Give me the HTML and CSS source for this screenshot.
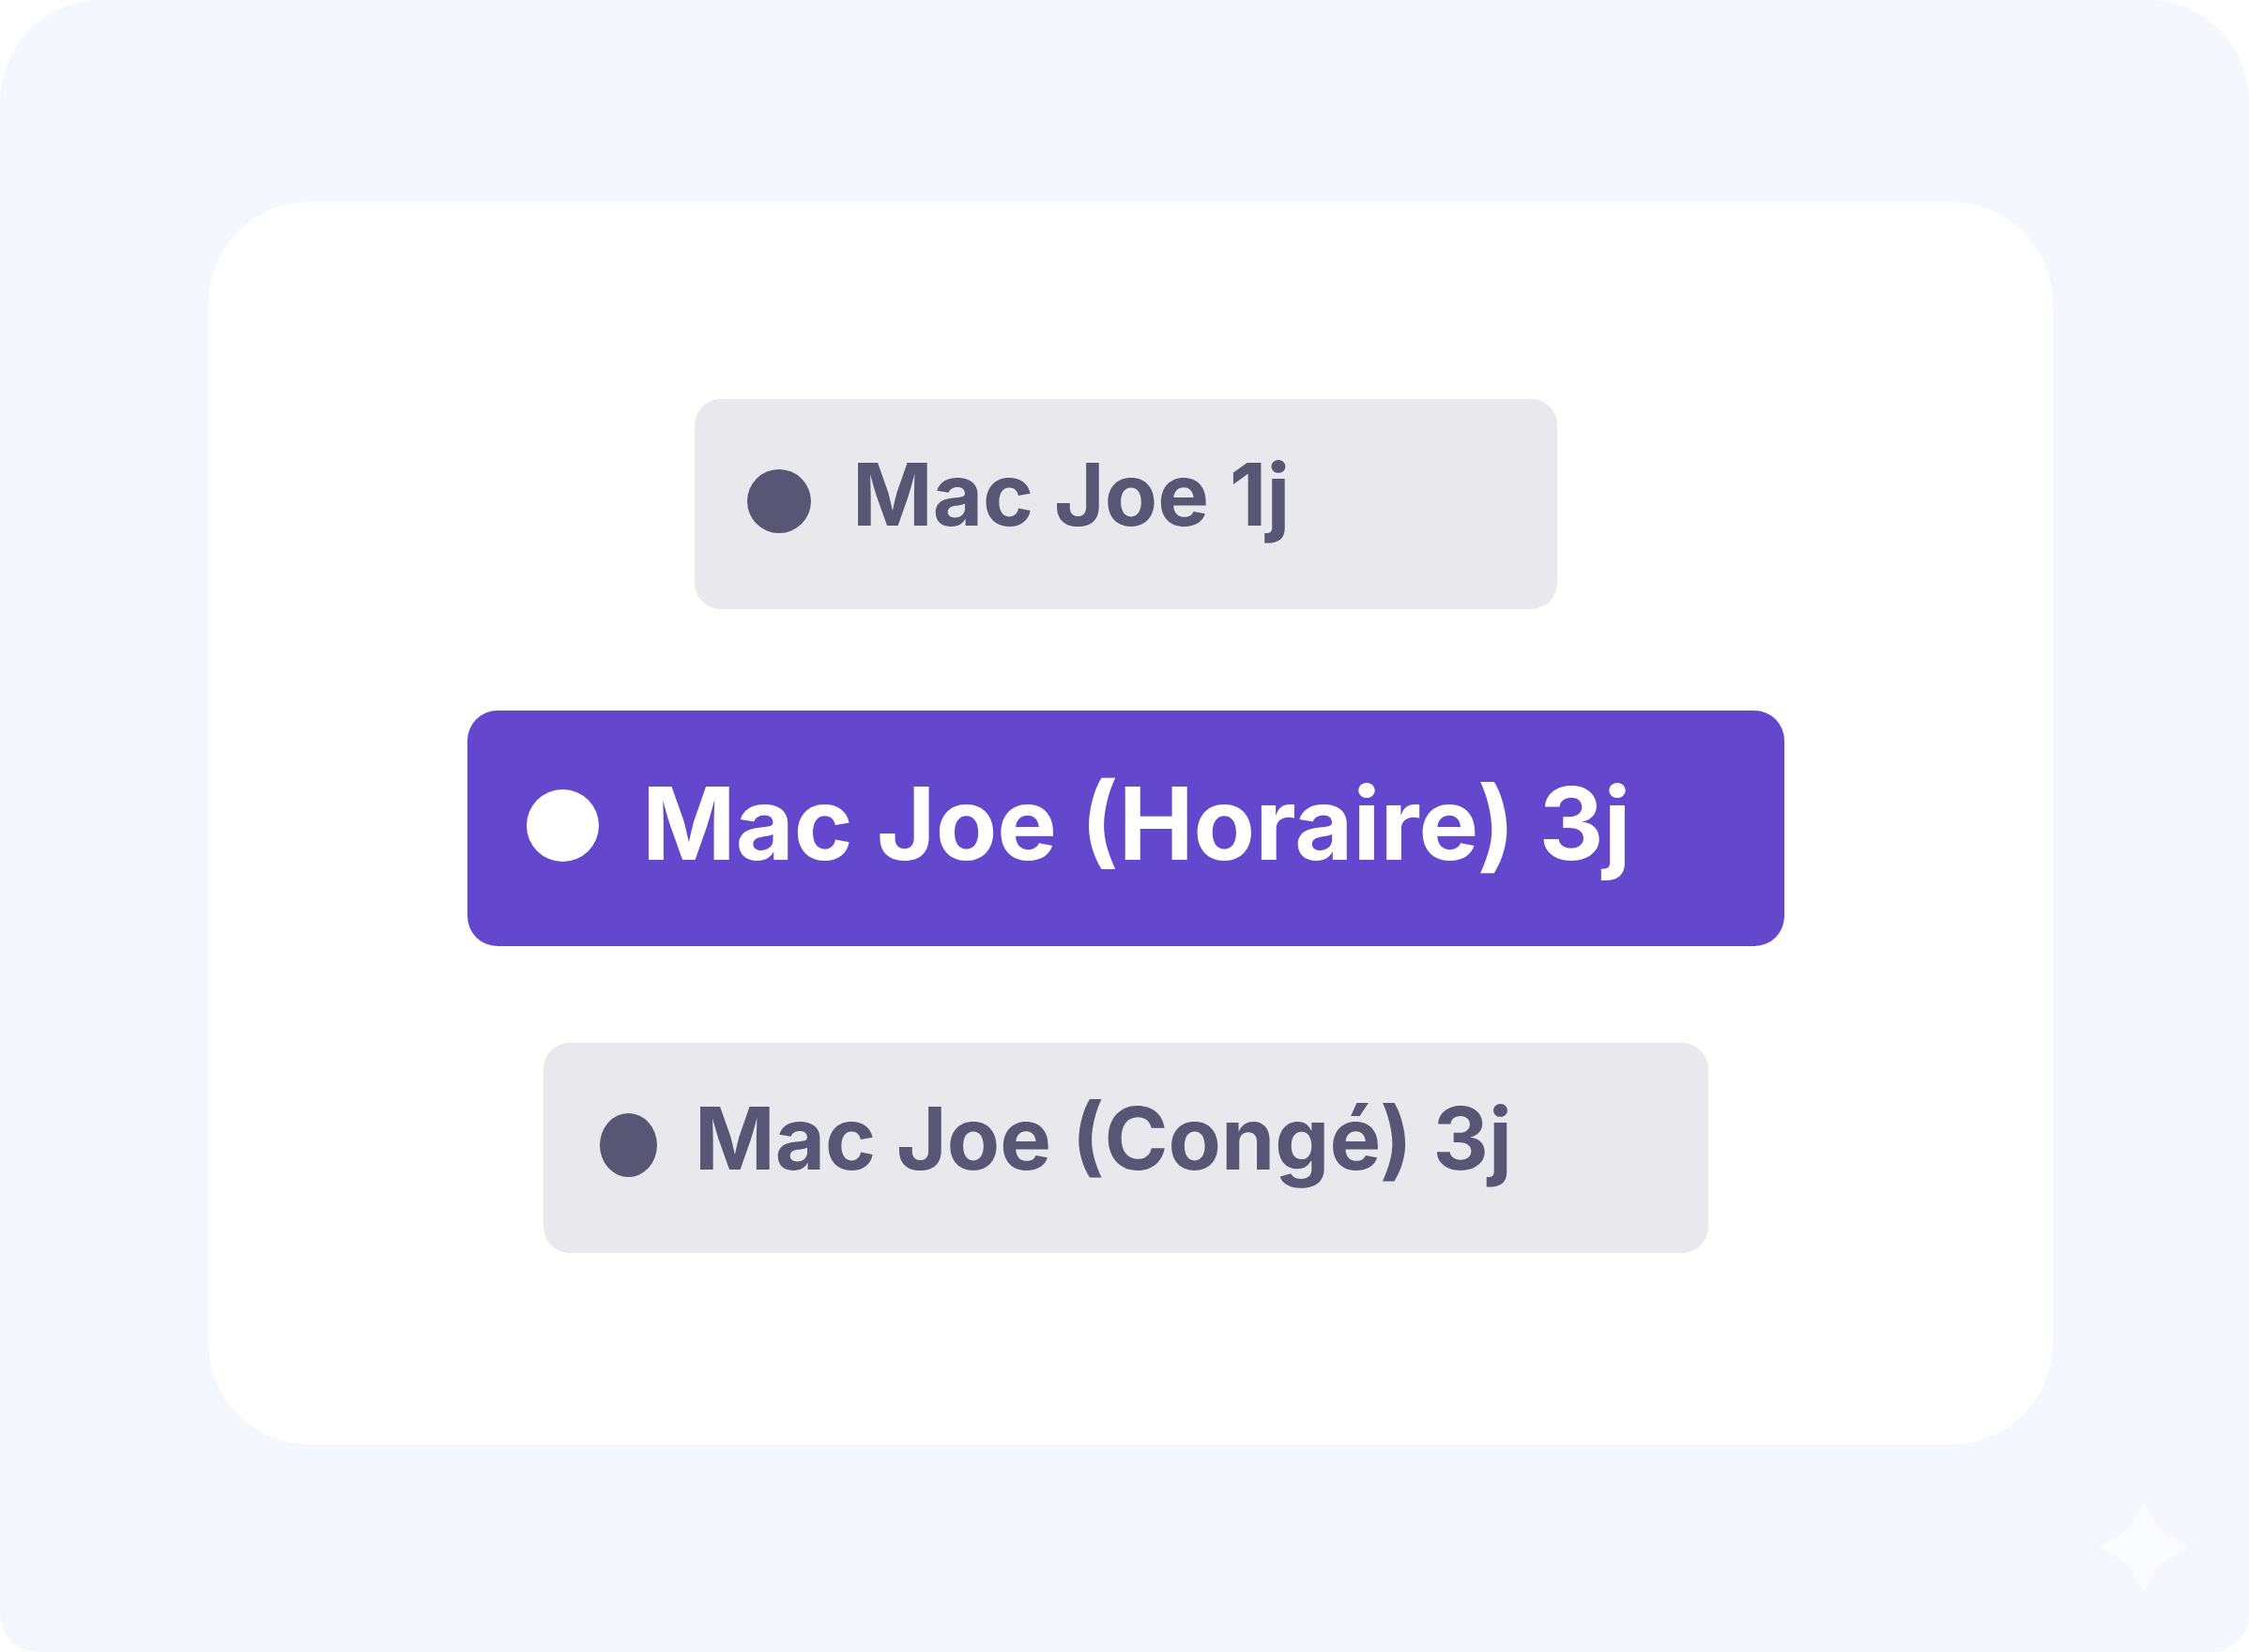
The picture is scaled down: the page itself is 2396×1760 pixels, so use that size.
FILE: index.html
```html
<!DOCTYPE html>
<html lang="fr">
<head>
    <meta charset="UTF-8">
    <meta name="viewport" content="width=device-width, initial-scale=1.0">
    <title>Mac Joe</title>
    <link rel="stylesheet" href="styles.css">
</head>
<body>

    <main class="panel">
        <ul class="card">
            <li class="entry entry-short">
                <span class="dot"></span>
                <span class="label">Mac Joe 1j</span>
            </li>
            <li class="entry entry-active">
                <span class="dot"></span>
                <span class="label">Mac Joe (Horaire) 3j</span>
            </li>
            <li class="entry entry-long">
                <span class="dot"></span>
                <span class="label">Mac Joe (Congé) 3j</span>
            </li>
        </ul>

        <svg class="sparkle" viewBox="0 0 96 96" aria-hidden="true">
            <path d="M48 0 C49.500 0 50 1 50.500 2.500 C59 24 72 37 93.500 45.500 C95 46 96 46.500 96 48 C96 49.500 95 50 93.500 50.500 C72 59 59 72 50.500 93.500 C50 95 49.500 96 48 96 C46.500 96 46 95 45.500 93.500 C37 72 24 59 2.500 50.500 C1 50 0 49.500 0 48 C0 46.500 1 46 2.500 45.500 C24 37 37 24 45.500 2.500 C46 1 46.500 0 48 0 Z"/>
        </svg>
    </main>

</body>
</html>
```
FILE: styles.css
```css
* {
    box-sizing: border-box;
}

body {
    font-family: Inter, "Liberation Sans", sans-serif;
    background-color: #fff;
    margin: 0;
}

.panel {
    position: relative;
    display: flex;
    min-height: 100vh;
    padding: 215px 209px 221px 222px;
    background-color: #f4f7fe;
    border-radius: 108px 108px 40px 40px;
}

.card {
    flex: 1;
    display: flex;
    flex-direction: column;
    align-items: center;
    margin: 0;
    padding: 210px 10px 204px 0;
    list-style: none;
    background-color: #fff;
    border-radius: 108px;
}

.entry {
    display: flex;
    align-items: center;
    gap: 40px;
    max-width: 100%;
    padding: 46px 56px 66px;
    background-color: #e8e8ed;
    border-radius: 28px;
    color: #585575;
    font-size: 92px;
    font-weight: 700;
    line-height: 112px;
    white-space: nowrap;
}

.entry-short {
    width: 919px;
    gap: 44px;
}

.entry-long {
    width: 1241px;
    padding-left: 60px;
}

.entry-active {
    width: 1403px;
    margin: 108px 0 103px;
    padding: 56px 63px 67px;
    gap: 46px;
    background-color: #6347cc;
    border-radius: 32px;
    color: #fff;
    font-size: 107px;
    line-height: 128px;
}

.dot {
    flex: none;
    width: 68px;
    height: 68px;
    margin-top: 14px;
    background-color: currentColor;
    border-radius: 50%;
}

.entry-long .dot {
    width: 61px;
}

.entry-active .dot {
    width: 77px;
    height: 77px;
    margin-top: 4px;
}

.sparkle {
    position: absolute;
    right: 65px;
    bottom: 65px;
    width: 94px;
    height: 94px;
    fill: #fafcff;
}
```
